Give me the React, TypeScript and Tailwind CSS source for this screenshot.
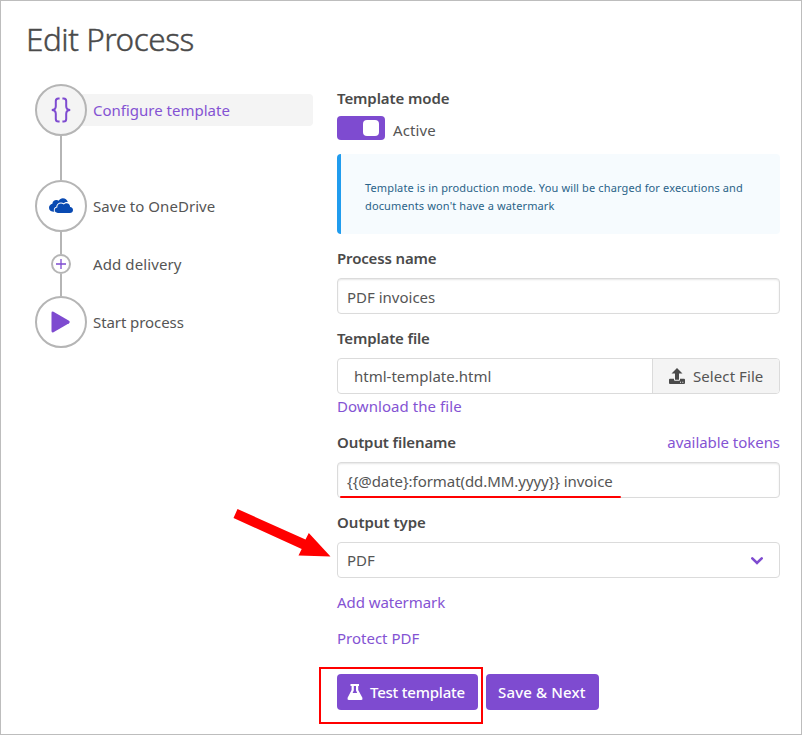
import type { ReactNode } from 'react';

const Label = ({ children }: { children: ReactNode }) => (
  <div className="flex h-6 items-center justify-between whitespace-nowrap">{children}</div>
);

const Strong = ({ className, children }: { className: string; children: ReactNode }) => (
  <span className={`text-[15px] font-semibold leading-6 text-[#4a4a4a] ${className}`}>{children}</span>
);

const Link = ({ className, children }: { className: string; children: ReactNode }) => (
  <a className={`text-[15px] leading-6 text-[#8453d3] ${className}`}>{children}</a>
);

const Circle = ({ className, children }: { className: string; children: ReactNode }) => (
  <div className={`flex size-[52px] shrink-0 items-center justify-center rounded-full border-2 border-[#b5b5b5] ${className}`}>
    {children}
  </div>
);

const Connector = ({ className }: { className: string }) => (
  <div className={`ml-[25px] w-0.5 bg-[#b5b5b5] ${className}`} />
);

function Steps() {
  return (
    <nav className="w-[278px] text-[15px] leading-6">
      <div className="flex items-center">
        <Circle className="z-10 bg-[#f4f4f4]">
          <svg width="20" height="26" viewBox="0 0 20 26" fill="none" stroke="#7e4bd0" strokeWidth="2">
            <path d="M8.6 1.4H7.3Q4.8 1.4 4.8 4V9.2Q4.8 12.8 .8 13Q4.8 13.2 4.8 16.8V22Q4.8 24.6 7.3 24.6H8.6" />
            <path d="M11.4 1.4H12.7Q15.2 1.4 15.2 4V9.2Q15.2 12.8 19.2 13Q15.2 13.2 15.2 16.8V22Q15.2 24.6 12.7 24.6H11.4" />
          </svg>
        </Circle>
        <div className="-ml-2 flex h-8 grow items-center rounded bg-[#f4f4f4] pl-[14px] text-[#8453d3]">
          <span>Configure template</span>
        </div>
      </div>
      <Connector className="h-11" />
      <div className="flex items-center gap-1.5">
        <Circle className="bg-white">
          <svg width="24" height="16" viewBox="0 0 24 16" fill="#094ab2">
            <path d="M5.3 13.8C2 13.8 0 12.4 0 9.8C0 7.7 1.4 6 3.4 5.7C3.6 3.4 5.4 2 7.4 2.1C8.4 2.1 9.2 2.5 9.6 2.8C10.6 1.1 12.1.2 13.8.2C16.2.2 18.2 1.7 18.8 4C16.9 3.8 15.6 4.4 14.9 5.2C11.2 3.3 7.5 5.3 7.3 8.7C4.8 9.3 4.2 12 5.3 13.8Z" />
            <path d="M8.8 14.9C6.8 14.9 5.7 13.8 5.7 12.1C5.7 10.5 6.8 9.5 8.3 9.4C8 6.3 11.5 4.2 14.8 6.5C17.5 3.9 21.2 5.7 21.1 9C22.9 9.1 24 10.3 24 11.9C24 13.7 22.7 14.9 20.9 14.9Z" />
          </svg>
        </Circle>
        <span className="tracking-[0.04px]">Save to OneDrive</span>
      </div>
      <Connector className="h-[22px]" />
      <div className="flex h-5 items-center">
        <div className="ml-4 flex size-5 items-center justify-center rounded-full border-2 border-[#b5b5b5]">
          <svg width="10" height="10" viewBox="0 0 10 10" stroke="#7e4bd0" strokeWidth="1.3">
            <path d="M0 5H10M5 0V10" />
          </svg>
        </div>
        <span className="ml-[22px] tracking-[0.1px]">Add delivery</span>
      </div>
      <Connector className="h-[22px]" />
      <div className="flex items-center gap-1.5">
        <Circle className="bg-white">
          <svg width="20" height="22" viewBox="0 0 20 22" fill="#7e4bd0">
            <path d="M.5 2Q.5 0 2.5 .8L18 9.7Q19.8 11 18 12.2L2.5 21.2Q.5 22 .5 20Z" />
          </svg>
        </Circle>
        <span className="tracking-[-0.08px]">Start process</span>
      </div>
    </nav>
  );
}

const box = 'flex h-9 items-center rounded border border-[#dbdbdb] bg-white text-[15px]';

export default function App() {
  return (
    <main className="relative h-[735px] w-[802px] overflow-hidden border border-[#bdbdbd] bg-white font-['Noto_Sans','Open_Sans',sans-serif] text-[#555] whitespace-nowrap">
      <h1 className="ml-[25px] mt-[15px] h-[46px] text-[31.5px] font-light leading-[46px] tracking-[-0.47px] text-[#4a4a4a] [-webkit-text-stroke:0.4px_#4a4a4a]">Edit Process</h1>
      <div className="ml-[34px] mt-[22px] flex items-start gap-6">
        <Steps />
        <form className="mt-0.5 w-[443px]">
          <Label>
            <Strong className="tracking-[-0.1px]">Template mode</Strong>
          </Label>
          <div className="mt-1.5 flex h-6 items-center">
            <div className="flex h-6 w-12 items-center justify-end rounded bg-[#7e4bd0] pr-1.5">
              <div className="size-4 rounded bg-white" />
            </div>
            <span className="ml-2 mt-1 text-[15px] tracking-[0.1px]">Active</span>
          </div>
          <div className="mt-3.5 h-20 rounded border-l-4 border-[#209cee] bg-[#f6fbfe] pl-6 pt-[25px] text-[11px] leading-[18px] tracking-[0.135px] text-[#2a6389]">
            <p>Template is in production mode. You will be charged for executions and</p>
            <p>documents won't have a watermark</p>
          </div>
          <div className="mt-3">
            <Label>
              <Strong className="tracking-[-0.15px]">Process name</Strong>
            </Label>
            <div className={`${box} mt-2 pl-[9px] pt-0.5 shadow-[inset_0_1px_2px_rgba(10,10,10,0.1)]`}>
              <span>PDF invoices</span>
            </div>
          </div>
          <div className="mt-3">
            <Label>
              <Strong className="tracking-[-0.15px]">Template file</Strong>
            </Label>
            <div className={`${box} mt-2 overflow-hidden`}>
              <span className="grow pl-4">html-template.html</span>
              <div className="flex h-full w-[127px] items-center border-l border-[#dbdbdb] bg-[#f4f4f4] pl-4">
                <svg width="16" height="16" viewBox="0 0 16 16" fill="#4a4a4a">
                  <path d="M8 0L13.5 5.6H10V11.7H6V5.6H2.5Z" />
                  <path fillRule="evenodd" d="M1 10.7H5V12Q5 12.7 6 12.7H10Q11 12.7 11 12V10.7H15Q16 10.7 16 11.7V15Q16 16 15 16H1Q0 16 0 15V11.7Q0 10.7 1 10.7ZM11 13.8V14.8H12V13.8ZM13.3 13.8V14.8H14.3V13.8Z" />
                </svg>
                <span className="ml-2 tracking-[0.08px]">Select File</span>
              </div>
            </div>
            <div className="h-6">
              <Link className="tracking-[0.06px]">Download the file</Link>
            </div>
          </div>
          <div className="mt-3">
            <Label>
              <Strong className="tracking-[-0.12px]">Output filename</Strong>
              <Link className="tracking-[-0.05px]">available tokens</Link>
            </Label>
            <div className={`${box} relative mt-2 pl-[9px] pt-0.5 shadow-[inset_0_1px_2px_rgba(10,10,10,0.1)]`}>
              <span className="tracking-[-0.06px]">{'{{@date}:format(dd.MM.yyyy}} invoice'}</span>
              <div className="absolute -bottom-px left-[2px] h-[2px] w-[281px] rounded-full bg-[#ff0000]" />
            </div>
          </div>
          <div className="mt-3">
            <Label>
              <Strong className="">Output type</Strong>
            </Label>
            <div className={`${box} mt-2 justify-between pl-[9px] pr-4`}>
              <span>PDF</span>
              <svg className="mt-px" width="12" height="8" viewBox="0 0 12 8" fill="none" stroke="#7e4bd0" strokeWidth="2.6" strokeLinecap="round">
                <path d="M1.3 1.4L6 6L10.7 1.4" />
              </svg>
            </div>
          </div>
          <div className="mt-3 h-6">
            <Link className="tracking-[-0.06px]">Add watermark</Link>
          </div>
          <div className="mt-3 h-6">
            <Link className="">Protect PDF</Link>
          </div>
          <div className="relative mt-6 flex gap-2 text-[15px] font-medium text-white">
            <div className="flex h-9 w-[141px] items-center rounded bg-[#7e4bd0] pl-2.5">
              <svg width="16" height="16" viewBox="0 0 16 16" fill="white">
                <path fillRule="evenodd" d="M3.5 0H12V2H11.2V6L15.4 13.8Q16 16 14.3 16H1.7Q0 16 .6 13.8L4.6 6V2H3.5ZM6.8 2V6.6L5.6 9H10.2L9 6.6V2Z" />
              </svg>
              <span className="ml-[7px] tracking-[-0.22px]">Test template</span>
            </div>
            <div className="flex h-9 w-[113px] items-center rounded bg-[#7e4bd0] pl-3">
              <span className="tracking-[0.15px]">Save &amp; Next</span>
            </div>
            <div className="absolute -left-[18px] -top-[7px] h-[57px] w-[164px] border-2 border-[#ff0000]" />
          </div>
        </form>
      </div>
      <svg className="absolute left-[232px] top-[507px]" width="100" height="52" viewBox="233 508 100 52" fill="#ff0000">
        <path d="M237.5 509L305.5 539.5L308.8 533L330.5 556.5L298.5 555.5L301.7 549L233.5 518Z" />
      </svg>
    </main>
  );
}
